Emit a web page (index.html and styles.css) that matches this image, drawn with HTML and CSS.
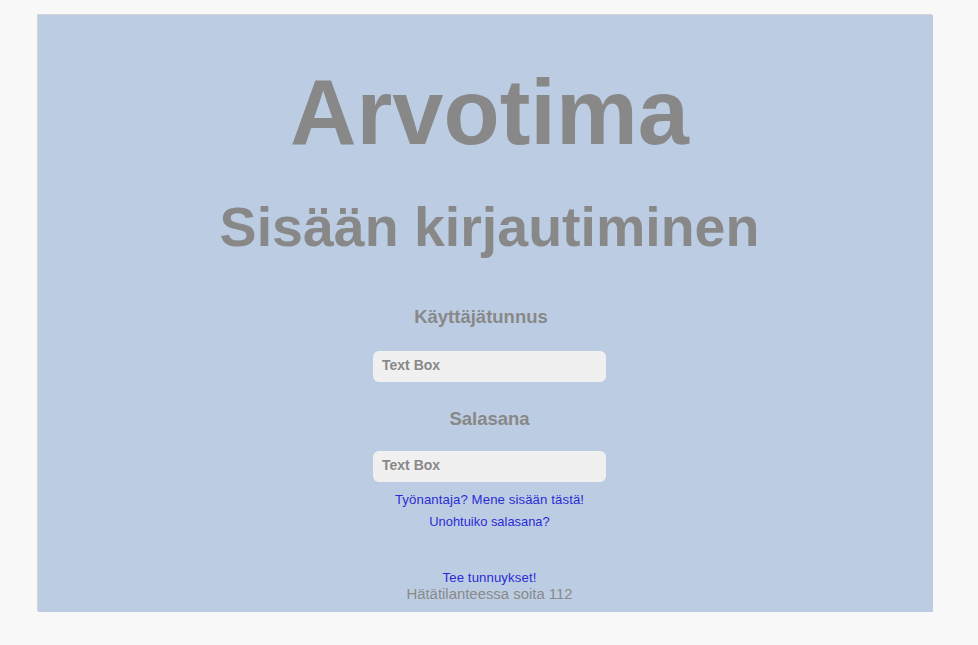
FILE: index.html
```html
<!DOCTYPE html>
<html lang="fi">
<head>
<meta charset="utf-8">
<title>Arvotima</title>
<link rel="stylesheet" href="styles.css">
</head>
<body>
<main class="panel">
  <h1 class="brand">Arvotima</h1>
  <h2 class="title">Sisään kirjautiminen</h2>
  <form class="login">
    <label class="field-label label-user" for="user">Käyttäjätunnus</label>
    <input class="textbox" id="user" type="text" placeholder="Text Box">
    <label class="field-label label-pass" for="pass">Salasana</label>
    <input class="textbox" id="pass" type="password" placeholder="Text Box">
  </form>
  <div class="links">
    <a class="link link-lg" href="#">Työnantaja? Mene sisään tästä!</a>
    <a class="link" href="#">Unohtuiko salasana?</a>
  </div>
  <div class="footer">
    <a class="link link-lg" href="#">Tee tunnuykset!</a>
    <span class="emergency">Hätätilanteessa soita 112</span>
  </div>
</main>
</body>
</html>
```
FILE: styles.css
```css
html, body {
  margin: 0;
  padding: 0;
}
body {
  background: #f8f8f8;
  font-family: "Liberation Sans", Arial, sans-serif;
  padding: 15px 45px 33px 38px;
}
.panel {
  box-sizing: border-box;
  width: 895px;
  height: 597px;
  background: #bccde3;
  box-shadow: -1px -1px 0 #d2d4d8;
  display: flex;
  flex-direction: column;
  align-items: center;
  padding-top: 51px;
  padding-left: 8px;
  color: #888888;
}
.brand {
  margin: 0;
  font-size: 92px;
  line-height: 92px;
  font-weight: bold;
  color: #888888;
}
.title {
  margin: 42px 0 0;
  font-size: 55.5px;
  line-height: 55px;
  font-weight: bold;
  color: #888888;
}
.login {
  display: flex;
  flex-direction: column;
  align-items: center;
  margin-top: 51px;
}
.field-label {
  font-size: 18.5px;
  line-height: 22px;
  font-weight: bold;
  color: #888888;
}
.label-user {
  padding-right: 17px;
}
.label-pass {
  margin-top: 26px;
}
.textbox {
  box-sizing: border-box;
  width: 233px;
  height: 31px;
  margin-top: 23px;
  border: none;
  border-radius: 6px;
  background: #f0f0f0;
  padding: 0 0 3px 9px;
  font-family: "Liberation Sans", Arial, sans-serif;
  font-size: 14px;
  font-weight: bold;
  color: #888888;
  outline: none;
}
.label-pass + .textbox {
  margin-top: 21px;
}
.textbox::placeholder {
  color: #888888;
  opacity: 1;
}
.links {
  display: flex;
  flex-direction: column;
  align-items: center;
  margin-top: 7px;
}
.link {
  font-size: 12.9px;
  line-height: 22px;
  color: #2b2bd6;
  text-decoration: none;
}
.link-lg {
  font-size: 13.2px;
  letter-spacing: 0.1px;
}
.footer {
  display: flex;
  flex-direction: column;
  align-items: center;
  margin-top: 36px;
}
.footer .link {
  line-height: 17px;
}
.emergency {
  font-size: 14.9px;
  line-height: 17px;
  color: #8a8a8a;
}
```
